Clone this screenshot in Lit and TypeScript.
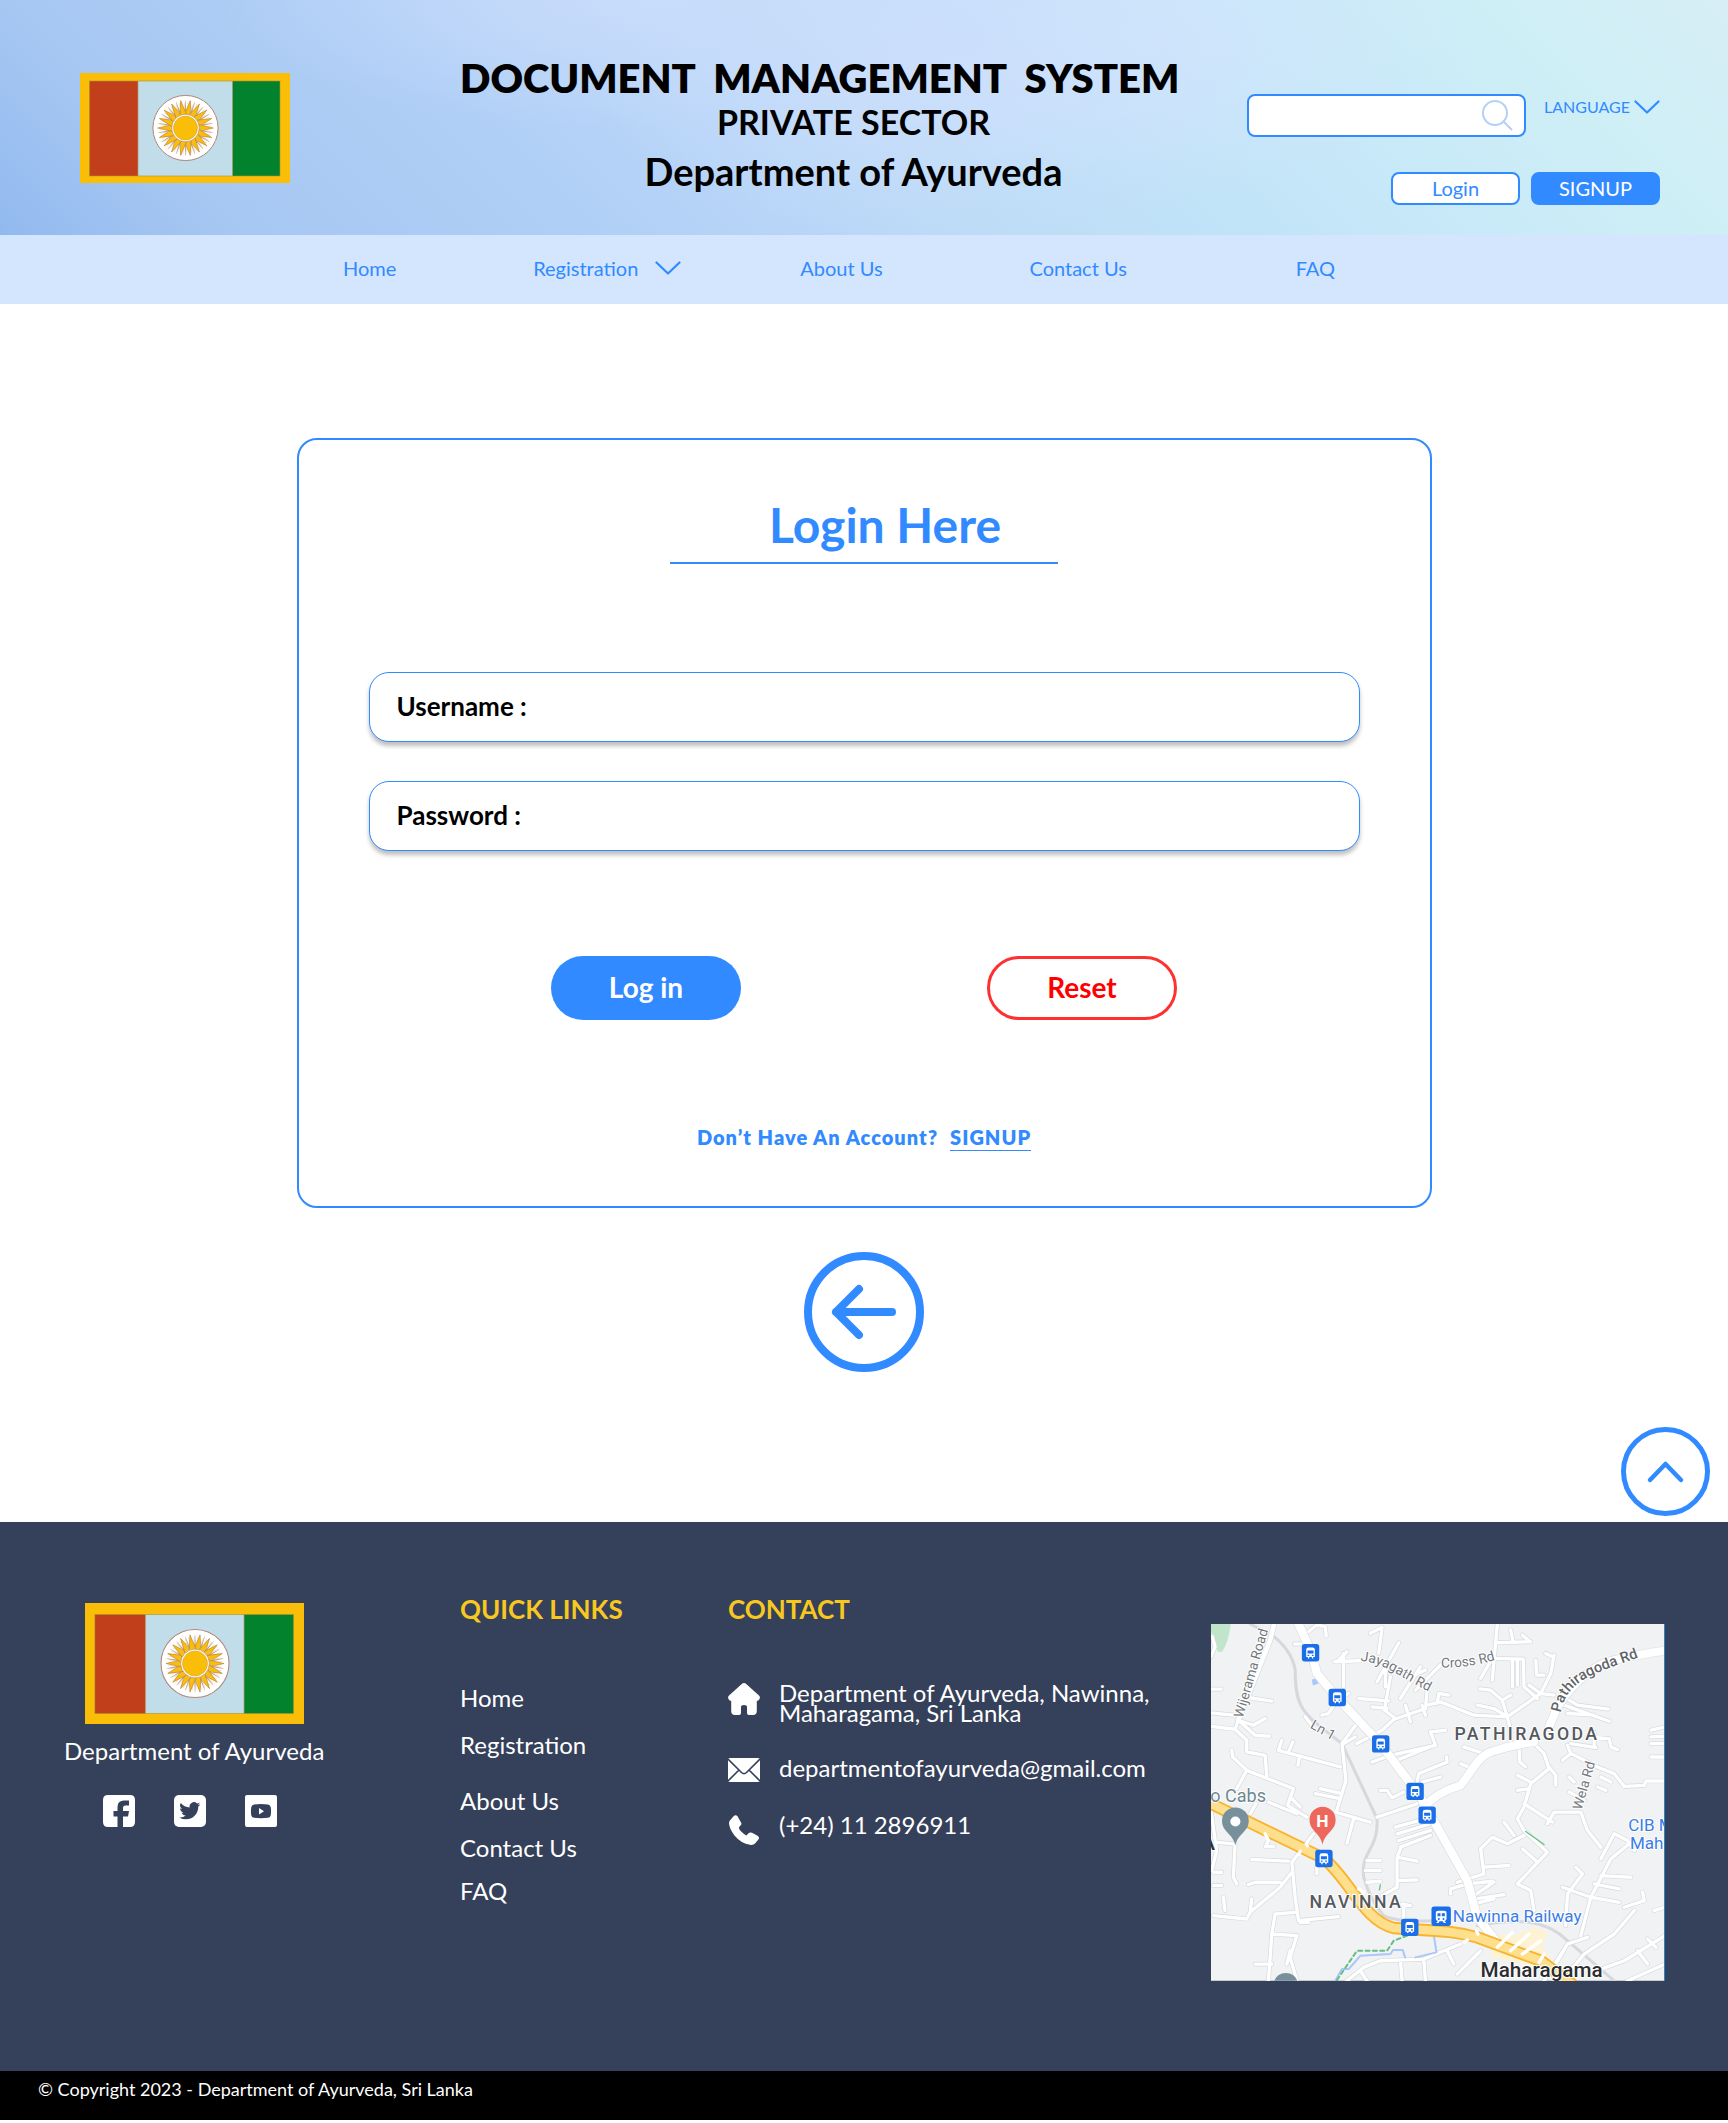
import { LitElement, html, css, svg } from "lit";
import { customElement } from "lit/decorators.js";

const NAV = ["Home", "Registration", "About Us", "Contact Us", "FAQ"];

const chevron = html`<svg class="chevron" viewBox="0 0 26 14" aria-hidden="true">
  <path d="M1.5 1.5 13 12.5 24.5 1.5" fill="none" stroke="currentColor" stroke-width="2.2" stroke-linecap="round" stroke-linejoin="round" />
</svg>`;

/* Department flag: three panels on a gold field with an 18-ray sun. */
@customElement("dept-flag")
export class DeptFlag extends LitElement {
  static styles = css`
    :host { display: block; background: #fbbe08; }
    svg { display: block; width: 100%; height: 100%; }
  `;
  render() {
    const rays = Array.from({ length: 18 }, (_, i) => i * 20);
    return html`<svg viewBox="0 0 210 110" role="img" aria-label="Flag of the Department of Ayurveda">
      <rect x="9.5" y="8" width="48.500" height="95" fill="#c23f1b" />
      <rect x="58" y="8" width="95" height="95" fill="#c0dde9" />
      <rect x="152.500" y="8" width="47.500" height="95" fill="#03822d" />
      <rect x="9.500" y="8" width="190.500" height="95" fill="none" stroke="#a8932c" stroke-width=".6" />
      <path d="M58 8V103M152.500 8V103" stroke="#b0946f" stroke-width=".7" />
      <g transform="translate(105.500 55)">
        <circle r="32.600" fill="#fff" stroke="#b1877a" stroke-width="1" />
        ${rays.map(
          (a) => svg`<g transform=${`rotate(${a})`}>
            <path d="M-.9-14-.2-27.500H.2L.9-14Z" fill="#c9a184" />
            <path d="M-2.200-15-1.500-26M2.200-15 1.500-26" stroke="#d9b9a5" stroke-width=".4" transform="rotate(2)" />
          </g>
          <path transform=${`rotate(${a + 10})`} d="M-3.400-13 0-27.800 3.400-13Z" fill="#fbbe08" stroke="#b9812f" stroke-width=".6" />`
        )}
        <circle r="13.800" fill="#fff" stroke="#b98a5c" stroke-width=".7" />
        <circle r="12" fill="#fbbe08" stroke="#cf9630" stroke-width=".5" />
      </g>
    </svg>`;
  }
}

/* Street map around Navinna. */
@customElement("area-map")
export class AreaMap extends LitElement {
  static styles = css`
    :host { display: block; border-right: 1px solid #2a86c8; }
    svg { display: block; width: 100%; height: auto; }
    text { font-family: Roboto, "Liberation Sans", sans-serif; paint-order: stroke; stroke: #fff; stroke-width: 6px; stroke-linejoin: round; }
    .area { font-size: 53px; font-weight: 500; fill: #55595e; letter-spacing: 7px; }
    .road { font-size: 41px; fill: #74787d; }
    .main { font-size: 44px; font-weight: 500; fill: #5e6368; }
    .place { font-size: 51px; fill: #3a7de6; }
    .cab { font-size: 54px; fill: #6d8791; }
    .town { font-size: 62px; font-weight: 500; fill: #2b2d30; }
    .pin { font-size: 52px; font-weight: 700; fill: #fff; stroke: none; }
  `;
  render() {
    const lanes = `M37 80 45 110 33 140M33 237H63M33 308 100 315M33 348 105 357 115 330 160 345 195 325M105 357 140 390V425L195 435 200 500M115 330 165 375 208 378M145 262 215 273
      M95 420 98 440 140 480 110 535M140 480 280 535 262 585 320 620M205 575 290 610M270 560 300 590M150 610 168 580
      M235 420 245 390M235 420 420 470M265 425 278 395M298 440 293 465M315 320 335 345M365 315 385 310 405 280
      M470 340 425 400 437 510 425 550 410 598M345 550 420 565M360 535 425 550M405 605 510 635M460 625 440 698M530 620 650 580
      M430 400 465 380M470 400 545 360M545 360 580 328 675 295 680 240M515 455 570 435 705 405 690 365 735 360M590 450 700 405M540 540 560 540 575 562 610 545M650 515 655 490 740 455 738 440M665 515 720 500
      M510 70 545 52 535 130M595 98 530 215M570 200 552 300 585 325M475 265 565 272M515 290 560 295M615 285 630 335M665 285 675 315M600 265 660 170M620 205 675 180M403 155 480 152M430 230 430 130M410 155 440 125M435 255 445 250M555 165 555 230M645 240 720 165
      M680 285 720 275 820 315 920 320 1020 250 985 225M710 280 715 250 745 255M830 285 880 295 920 320 905 270 870 240 838 236M905 270 930 255M920 320 930 360 930 395
      M890 42 875 210M885 98 990 95M930 60 937 95M965 75 988 95M840 205 875 145 968 147 970 230 1010 265M935 150 935 230M950 150 950 225M1005 150 1008 195 1030 195M1060 135 1050 190 1020 250 1060 255M1035 130 1055 140M1090 260 1130 285 1222 297M1090 285 1225 333M1100 310 1180 315
      M283 102 330 100M325 65 350 45 375 50 378 78M1165 380 1225 385 1230 410 1250 418M1180 365V410M1350 360 1392 350M1350 400 1392 400M1350 440 1392 440M1350 380 1392 378
      M1000 400 1030 430 1045 475 990 520 970 590 950 625 970 660 1040 725 950 820 990 840 1000 900M955 410 957 455 975 470M1045 470 1065 495 1065 525M950 495 990 515M950 540 985 535M790 410 850 430M780 460 815 475
      M1100 405 1110 430 1190 470 1240 490 1270 528 1330 525 1335 512 1392 512M1085 450 1110 430M1110 400 1185 412M970 580 1055 635M1040 640 1060 605 1140 605 1160 660 1200 710M1200 500 1230 515M1190 530 1215 540M1105 500 1120 515M1105 545 1150 570
      M970 675 920 700 875 680 840 715 850 790 770 815M910 635 940 675M965 715 1005 750M850 770 925 765M750 850 750 835 800 820 875 812M820 855 880 815M825 865 910 852M820 880 880 865M1200 745 1240 670 1280 690 1300 720M1285 700 1230 745 1170 860 1140 975M1095 945 1100 850 1145 790 1125 770M1085 830 1170 860 1255 875M1180 820 1255 835M1200 795 1290 800M1270 890 1330 870 1325 845
      M585 650 675 625M590 670 690 640M595 690 690 660M600 710 690 675M600 715 590 740 590 830 545 855M590 740 650 752M590 810 650 808M500 750H540M495 780H540M500 815 540 812
      M340 670 275 755 285 860 295 930 415 918M275 785 240 830 150 905 155 865M155 747 265 752M145 822 165 815 240 815M40 915 140 925 150 905M225 910 215 970 205 1110M225 910 285 905M215 970 290 975 270 1040 290 1110M300 935 325 935M165 1060 215 1060M270 1020 260 1060
      M33 600 50 720 35 780M105 700 100 800 110 820M45 695 100 700M40 785 65 785M40 825 65 825M70 860 75 900M200 700 215 660M195 708H220M350 770V790M610 890V925M605 880 630 885
      M440 1110 490 1070 540 1050 670 1045 780 1000M600 1050 605 1110M670 1050 675 1110M770 1090 840 1020M740 1020 760 1060M480 1080 500 1110M1065 1060 1100 1000 1160 980M1030 1110 1100 1000M1150 1030 1100 1090M1150 1030 1240 970 1300 900M1200 1075 1270 1050 1392 975M1310 1020 1340 1060M1280 1110 1392 1060M1340 985 1365 1010M1360 900 1392 890`;
    const bus = [[331, 128], [411, 262], [541, 401], [644, 543], [680, 614], [371, 744], [628, 950]];
    return html`<svg viewBox="33 42 1356 1068" role="img" aria-label="Map of Navinna, Pathiragoda and Maharagama">
      <defs>
        <path id="jayagath" d="M480 152C560 160 600 205 700 252" />
        <path id="patha" d="M1080 308C1100 200 1190 190 1350 128" />
        <path id="lane" d="M328 352 410 398" />
        <path id="cross" d="M722 172 Q800 175 890 148" />
      </defs>
      <rect x="33" y="42" width="1356" height="1068" fill="#f1f2f4" />
      <path d="M33 42H92Q86 95 66 126L52 124Q45 80 33 66Z" fill="#c1e5cb" />
      <path d="M335 208 350 205 355 220 338 226Z" fill="#a8c7fa" />
      <path d="M895 970 940 975 1000 950 1042 965 1025 1010 1055 1050 1000 1065 870 1040Z" fill="#fdf3d2" />
      <g fill="none" stroke-linejoin="round" stroke-linecap="round">
        <path d="M150 42 215 75Q275 120 285 180C285 300 310 310 425 400L530 625C535 720 480 720 490 800Q510 870 550 915Q590 935 700 930M830 945C960 920 1040 930 1100 990L1240 1110" stroke="#d6d8db" stroke-width="9" />
        <path d=${lanes} stroke="#d6d9dd" stroke-width="14" />
        <path d="M222 42 210 90 115 330" stroke="#d6d9dd" stroke-width="18" />
        <path d=${lanes} stroke="#fff" stroke-width="10" />
        <path d="M222 42 210 90 115 330" stroke="#fff" stroke-width="14" />
        <path d="M295 42 335 130 350 190 410 262 541 401 660 560 800 810 830 920 890 995" stroke="#dcdee1" stroke-width="29" />
        <path d="M670 590Q710 545 780 525C810 490 830 440 870 425Q930 405 1000 395M1045 350 1070 290Q1150 170 1240 150T1392 122" stroke="#dcdee1" stroke-width="28" />
        <path d="M295 42 335 130 350 190 410 262 541 401 660 560 800 810 830 920 890 995" stroke="#fff" stroke-width="25" />
        <path d="M670 590Q710 545 780 525C810 490 830 440 870 425Q930 405 1000 395M1045 350 1070 290Q1150 170 1240 150T1392 122" stroke="#fff" stroke-width="24" />
        <path d="M975 663 1030 702M540 823 537 838" stroke="#6abf83" stroke-width="4" />
        <path d="M405 1110 425 1075 445 1075 480 1035 570 1030 578 1018H607L614 1040M645 1040 708 1025 700 975" stroke="#a8c7fa" stroke-width="6" />
        <path d="M410 1108 470 1020 560 1020 580 990 625 973" stroke="#67bd83" stroke-width="6" stroke-dasharray="12 10" />
        <path d="M33 580 371 744C450 810 490 930 580 952C680 962 740 955 830 980L1020 1050 1120 1125" stroke="#f8b42d" stroke-width="37" />
        <path d="M33 580 371 744C450 810 490 930 580 952C680 962 740 955 830 980L1020 1050 1120 1125" stroke="#fedf8e" stroke-width="26" />
        <path d="M890 1010 935 965M930 1020 985 970M965 1030 1020 990M1015 1055 1030 1030M195 670 205 690M318 700 322 706M300 722 296 732M475 835 490 845M828 962 832 970M800 988 790 995" stroke="#fff" stroke-width="10" />
      </g>
      <text class="road" transform="translate(128 325) rotate(-74)">Wijerama Road</text>
      <text class="road"><textPath href="#jayagath">Jayagath Rd</textPath></text>
      <text class="road"><textPath href="#cross">Cross Rd</textPath></text>
      <text class="road"><textPath href="#lane">Ln 1</textPath></text>
      <text class="road" transform="translate(1142 600) rotate(-74)">Wela Rd</text>
      <text class="main"><textPath href="#patha">Pathiragoda Rd</textPath></text>
      <text class="area" x="762" y="390">PATHIRAGODA</text>
      <text class="area" x="328" y="891">NAVINNA</text>
      <text class="cab" x="31" y="575">o Cabs</text>
      <text class="town" x="4" y="718">A</text>
      <text class="place" x="1282" y="662">CIB M</text>
      <text class="place" x="1287" y="716">Maha</text>
      <text class="place" x="757" y="934">Nawinna Railway</text>
      <text class="town" x="840" y="1098">Maharagama</text>
      <path d="M106 705C98 668 66 665 66 631A40 40 0 0 1 146 631C146 665 114 668 106 705Z" fill="#78909c" />
      <circle cx="106" cy="633" r="15" fill="#fff" />
      <path d="M222 1110A38 38 0 0 1 292 1110Z" fill="#78909c" />
      <path d="M367 702C359 665 328 662 328 628A39 39 0 0 1 406 628C406 662 375 665 367 702Z" fill="#ee675c" />
      <text class="pin" x="348" y="649">H</text>
      ${bus.map(
        ([x, y]) => svg`<g transform=${`translate(${x} ${y})`}>
          <rect x="-26" y="-26" width="52" height="52" rx="8" fill="#1a6fe8" />
          <path d="M-13 13V-9Q-13-16-6-16H6Q13-16 13-9V13H8V17H4V13H-4V17H-8V13Z" fill="#fff" />
          <path d="M-9-7H9V2H-9ZM-9 6H-4V10H-9ZM4 6H9V10H4Z" fill="#1a6fe8" />
        </g>`
      )}
      <g transform="translate(722 917)">
        <rect x="-29" y="-29" width="58" height="58" rx="8" fill="#1a6fe8" />
        <path d="M-16 8V-10Q-16-17-8-17H8Q16-17 16-10V8Q16 13 10 14L15 20H8L5 15H-5L-8 20H-15L-10 14Q-16 13-16 8Z" fill="#fff" />
        <path d="M-11-9H-2V0H-11ZM2-9H11V0H2Z" fill="#1a6fe8" />
        <circle cx="-7" cy="8" r="3" fill="#1a6fe8" /><circle cx="7" cy="8" r="3" fill="#1a6fe8" />
      </g>
    </svg>`;
  }
}

@customElement("app-root")
export class AppRoot extends LitElement {
  static styles = css`
    :host { display: block; background: #fff; color: #000; font-family: Lato, "Liberation Sans", sans-serif; font-size: 20px; }
    *, *::before { box-sizing: border-box; }
    h1, h2, h3, p, ul { margin: 0; padding: 0; }
    ul { list-style: none; }
    a { color: inherit; text-decoration: none; }
    button, input, select { font: inherit; color: inherit; margin: 0; }
    button { cursor: pointer; padding: 0; }
    svg { display: block; }

    .top {
      display: grid; grid-template-columns: 210px minmax(0, 1fr) 413px; align-items: start;
      padding: 56px 68px 30px 80px;
      background:
        radial-gradient(ellipse 420px 130px at 37% 0, rgba(205, 221, 252, .75), rgba(205, 221, 252, 0)),
        radial-gradient(ellipse 360px 170px at 55% 30%, rgba(207, 222, 253, .8), rgba(207, 222, 253, 0)),
        radial-gradient(ellipse 300px 150px at 68% 15%, rgba(209, 230, 252, .8), rgba(209, 230, 252, 0)),
        linear-gradient(45deg, #92b9ef 0, #a6c7f2 12%, #b0cff6 30%, #b9d6f8 42%, #bddcf6 51%, #c0e2f8 61%, #c8e9f8 75%, #cfeff6 88%, #d6edf5 100%);
    }
    .flag { height: 110px; margin-top: 17px; }
    .titles { padding-left: 170px; text-align: center; }
    .titles h1 { font-size: 40px; line-height: 44px; font-weight: 800; text-align: left; white-space: pre; }
    .sector { font-size: 34px; line-height: 44px; font-weight: 700; }
    .dept { font-size: 38px; line-height: 54px; font-weight: 700; }
    .tools { padding-top: 38px; display: grid; gap: 35px; color: #318aff; }
    .tool-row { display: flex; justify-content: space-between; align-items: flex-start; }
    .search { display: flex; align-items: center; width: 279px; height: 43px; padding: 0 11px; background: #fff; border: 2px solid #318aff; border-radius: 8px; }
    .search input { flex: 1; min-width: 0; border: 0; outline: 0; background: none; }
    .search svg { width: 31px; height: 31px; }
    .language { display: flex; align-items: center; gap: 4px; }
    .language select { appearance: none; border: 0; padding: 0; background: none; font-size: 16px; line-height: 26px; height: 26px; }
    .chevron { width: 26px; height: 14px; }
    .auth { display: flex; justify-content: flex-end; gap: 11px; }
    .auth a { width: 129px; height: 33px; border: 2px solid #318aff; border-radius: 8px; background: #fff; line-height: 28px; text-align: center; }
    .auth .solid { background: #318aff; color: #fff; }

    .nav { display: grid; grid-template-columns: 190fr 267fr 229fr 266fr 432fr; align-items: center; height: 69px; padding: 0 0 4px 343px; background: #d4e5fe; color: #318aff; }
    .nav a { display: inline-flex; align-items: center; gap: 17px; line-height: 28px; }

    main { display: flex; flex-direction: column; align-items: center; padding: 134px 18px 6px; }
    .card { display: flex; flex-direction: column; align-items: center; width: 1135px; max-width: 100%; padding: 56px 70px 55px; border: 2px solid #318aff; border-radius: 20px; }
    .card h2 { width: 388px; padding: 0 0 8px 42px; border-bottom: 2px solid #318aff; color: #318aff; font-size: 48px; line-height: 58px; font-weight: 700; text-align: center; }
    .fields { display: grid; gap: 39px; width: 100%; margin-top: 108px; }
    .field { display: flex; align-items: center; gap: 12px; height: 70px; padding: 0 27px 3px; border: 1px solid #318aff; border-radius: 20px; background: #fff; box-shadow: 0 4px 4px rgba(0, 0, 0, .25); font-size: 26px; line-height: 32px; }
    .field label { font-weight: 700; }
    .field input { flex: 1; min-width: 0; border: 0; outline: 0; background: none; }
    .actions { display: flex; gap: 246px; margin-top: 105px; }
    .actions button { width: 190px; height: 64px; padding-bottom: 3px; border-radius: 32px; font-size: 28px; line-height: 34px; font-weight: 700; }
    .submit { border: 0; background: #318aff; color: #fff; }
    .reset { border: 3px solid #ff3030; background: #fff; color: #f00; }
    .join { display: flex; gap: 12px; margin-top: 104px; color: #318aff; font-weight: 800; line-height: 26px; letter-spacing: 1px; }
    .join a { border-bottom: 1px solid #318aff; }
    .round { border: 0; background: none; border-radius: 50%; color: #318aff; }
    .round svg { width: 100%; height: 100%; }
    .back { width: 120px; height: 120px; margin-top: 44px; }
    .up { width: 89px; height: 89px; margin-top: 55px; align-self: flex-end; }

    .foot { display: grid; grid-template-columns: 396fr 268fr 483fr 454fr; align-items: start; padding: 71px 63px 90px 64px; background: #35405a; color: #fff; font-size: 24px; line-height: 30px; }
    .about { display: grid; justify-items: center; width: 260px; padding-top: 10px; }
    .about dept-flag { width: 219px; height: 121px; }
    .about p { margin-top: 12px; white-space: nowrap; }
    .social { display: flex; gap: 39px; margin-top: 29px; padding-right: 8px; }
    .social svg { width: 32px; height: 32px; }
    .foot h3 { color: #f8c81e; font-size: 26px; line-height: 32px; font-weight: 700; }
    .links { display: grid; grid-template-rows: 47px 56px 47px 43px 30px; margin-top: 58px; }
    .contact { display: grid; grid-template-rows: 75px 57px 40px; margin-top: 58px; }
    .contact li { display: grid; grid-template-columns: 32px 1fr; column-gap: 19px; align-items: start; line-height: 20px; white-space: nowrap; }
    .contact svg { width: 32px; }
    .contact p { line-height: 20px; }
    area-map { margin-top: 31px; }
    .legal { padding: 7px 38px 20px; background: #000; color: #fff; font-size: 18px; line-height: 22px; }
  `;

  render() {
    return html`
      <header>
        <div class="top">
          <dept-flag class="flag"></dept-flag>
          <div class="titles">
            <h1>DOCUMENT  MANAGEMENT  SYSTEM</h1>
            <p class="sector">PRIVATE SECTOR</p>
            <p class="dept">Department of Ayurveda</p>
          </div>
          <div class="tools">
            <div class="tool-row">
              <div class="search">
                <input type="search" aria-label="Search" />
                <svg viewBox="0 0 31 31" fill="none" stroke="#b3d0f7" stroke-width="2" aria-hidden="true">
                  <circle cx="13" cy="13" r="12" /><path d="M21.500 21.500 30 30" />
                </svg>
              </div>
              <div class="language">
                <select aria-label="Language"><option>LANGUAGE</option></select>
                ${chevron}
              </div>
            </div>
            <div class="auth">
              <a href="#login">Login</a>
              <a class="solid" href="#signup">SIGNUP</a>
            </div>
          </div>
        </div>
        <nav class="nav" aria-label="Main">
          ${NAV.map((n) => html`<div><a href="#">${n}${n === "Registration" ? chevron : ""}</a></div>`)}
        </nav>
      </header>

      <main>
        <form class="card" @submit=${(e: Event) => e.preventDefault()}>
          <h2>Login Here</h2>
          <div class="fields">
            <div class="field"><label for="user">Username :</label><input id="user" type="text" autocomplete="username" /></div>
            <div class="field"><label for="pass">Password :</label><input id="pass" type="password" autocomplete="current-password" /></div>
          </div>
          <div class="actions">
            <button class="submit" type="submit">Log in</button>
            <button class="reset" type="reset">Reset</button>
          </div>
          <p class="join"><span>Don’t Have An Account?</span><a href="#signup">SIGNUP</a></p>
        </form>
        <button class="round back" type="button" aria-label="Back" @click=${() => history.back()}>
          <svg viewBox="0 0 120 120" fill="none" stroke="currentColor" stroke-width="8" stroke-linecap="round" stroke-linejoin="round">
            <circle cx="60" cy="60" r="56" /><path d="M88 60H32M55 37 32 60 55 83" />
          </svg>
        </button>
        <button class="round up" type="button" aria-label="Back to top" @click=${() => window.scrollTo(0, 0)}>
          <svg viewBox="0 0 89 89" fill="none" stroke="currentColor" stroke-linecap="round" stroke-linejoin="round">
            <circle cx="44.500" cy="44.500" r="42" stroke-width="5" /><path d="M29 53 44.500 37 60 53" stroke-width="4.500" />
          </svg>
        </button>
      </main>

      <footer>
        <div class="foot">
          <div class="about">
            <dept-flag></dept-flag>
            <p>Department of Ayurveda</p>
            <div class="social">
              <a href="#" aria-label="Facebook"><svg viewBox="0 0 32 32">
                <path d="M5 0H27Q32 0 32 5V27Q32 32 27 32H20V21.500H25L26 16H20V13Q20 10.500 22.500 10.500H26V5.500H21Q14.500 5.500 14.500 12V16H10.500V21.500H14.500V32H5Q0 32 0 27V5Q0 0 5 0Z" fill="#fff" />
              </svg></a>
              <a href="#" aria-label="Twitter"><svg viewBox="0 0 32 32">
                <rect width="32" height="32" rx="5" fill="#fff" />
                <path transform="translate(5.300 5.200) scale(.88)" d="M23.950 4.570a10 10 0 0 1-2.820.770 4.960 4.960 0 0 0 2.160-2.720c-.950.560-2 .960-3.120 1.180a4.920 4.920 0 0 0-8.380 4.480C7.690 8.100 4.070 6.130 1.640 3.160a4.920 4.920 0 0 0 1.520 6.570 4.900 4.900 0 0 1-2.230-.610v.060a4.920 4.920 0 0 0 3.950 4.830 5 5 0 0 1-2.210.080 4.940 4.940 0 0 0 4.600 3.420A9.870 9.870 0 0 1 0 19.540a13.990 13.990 0 0 0 7.550 2.210c9.050 0 14-7.500 14-13.980 0-.210 0-.420-.020-.630a9.940 9.940 0 0 0 2.420-2.570Z" fill="#35405a" />
              </svg></a>
              <a href="#" aria-label="YouTube"><svg viewBox="0 0 32 32">
                <rect width="32" height="32" rx="2" fill="#fff" />
                <path d="M9 9.500Q16 8.500 23 9.500 25.500 10 25.800 12.500 26.300 16 25.800 20 25.500 22.500 23 22.800 16 23.600 9 22.800 6.500 22.500 6.200 20 5.700 16 6.200 12.500 6.500 10 9 9.500Z" fill="#35405a" />
                <path d="M14 13V19.500L19 16.200Z" fill="#fff" />
              </svg></a>
            </div>
          </div>
          <div>
            <h3>QUICK LINKS</h3>
            <ul class="links">${NAV.map((n) => html`<li><a href="#">${n}</a></li>`)}</ul>
          </div>
          <div>
            <h3>CONTACT</h3>
            <ul class="contact">
              <li>
                <svg viewBox="0 0 32 32" aria-hidden="true"><path d="M13.500 1.200Q16-1 18.500 1.200L31 12.500Q32.500 14 31.500 16 30.500 18 28.800 18V28Q28.800 32 25 32H21Q19 32 19 30V24Q19 22 16 22T13 24V30Q13 32 11 32H7Q3.200 32 3.200 28V18Q1.500 18 .500 16-.500 14 1 12.500Z" fill="#fff" /></svg>
                <p>Department of Ayurveda, Nawinna,<br />Maharagama, Sri Lanka</p>
              </li>
              <li>
                <svg viewBox="0 0 32 24" aria-hidden="true"><rect width="32" height="24" rx="2" fill="#fff" /><path d="M0 1 13.500 14.500Q16 16.800 18.500 14.500L32 1M0 23 11 12M32 23 21 12" fill="none" stroke="#35405a" stroke-width="1.600" /></svg>
                <a href="mailto:departmentofayurveda@gmail.com">departmentofayurveda@gmail.com</a>
              </li>
              <li>
                <svg viewBox="0 0 32 30" aria-hidden="true"><path d="M1.500 6 6 .800Q8-.600 9.500 1.300L13 7.500Q14 9 12.500 10.500L10.800 12.500Q11 14.500 13.500 16.800 16 19.500 18.500 20.600L20.500 18.300Q22 17 24 17.800L29.500 20.800Q31.500 22 30.800 24L27 28.500Q25.500 30.300 22 29.800 13 28.500 6.500 20.500 1.500 14 1 8.500 1 7 1.500 6Z" fill="#fff" /></svg>
                <a href="tel:+24112896911">(+24) 11 2896911</a>
              </li>
            </ul>
          </div>
          <area-map></area-map>
        </div>
        <p class="legal">© Copyright 2023 - Department of Ayurveda, Sri Lanka</p>
      </footer>
    `;
  }
}
